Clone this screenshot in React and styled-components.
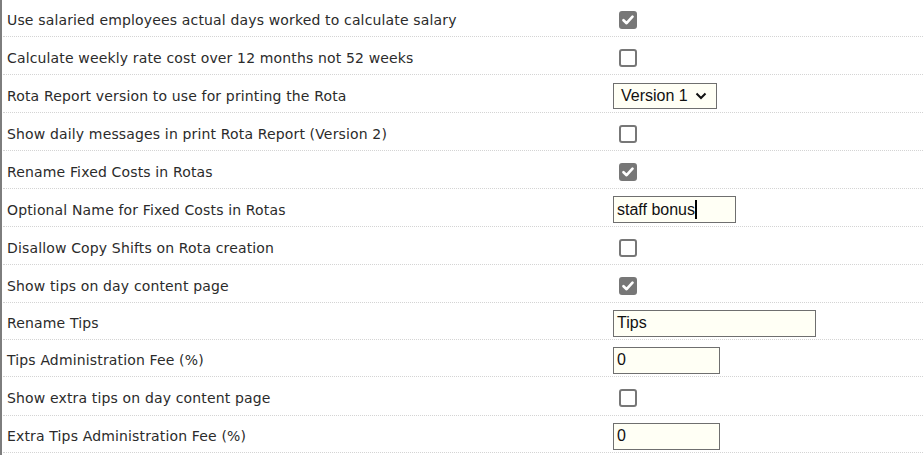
import React from "react";
import styled, { createGlobalStyle } from "styled-components";

const Global = createGlobalStyle`
  html, body { margin: 0; padding: 0; background: #fff; }
  body { font-family: "DejaVu Sans", sans-serif; }
`;

const Panel = styled.div`
  width: 923px;
  height: 456px;
  overflow: hidden;
  border-left: 2px solid #7d7d7d;
  box-sizing: border-box;
  margin-top: -1px;
`;

const Row = styled.div`
  display: grid;
  grid-template-columns: 610px 1fr;
  align-items: center;
  height: ${(p) => p.$h || 38}px;
  padding-top: 4px;
  margin-left: 1px;
  border-bottom: 1px dotted #d4d4d4;
  box-sizing: border-box;
`;

const Label = styled.div`
  padding-left: 4px;
  font-size: 14px;
  letter-spacing: 0.15px;
  color: #2b2b2b;
  white-space: nowrap;
`;

const Cell = styled.div`
  display: flex;
  align-items: center;
`;

const Box = styled.span`
  width: 18px;
  height: 18px;
  margin-left: 6px;
  box-sizing: border-box;
  border-radius: 3px;
  border: 2px solid #777;
  background: ${(p) => (p.$checked ? "#777" : "#fff")};
  display: flex;
  align-items: center;
  justify-content: center;
`;

const Field = styled.div`
  width: ${(p) => p.$w}px;
  height: 27px;
  box-sizing: border-box;
  border: 1px solid #6f6f6f;
  background: #fffff5;
  font-family: "Liberation Sans", Arial, sans-serif;
  font-size: 16px;
  color: #111;
  display: flex;
  align-items: center;
  padding-left: 3px;
`;

const Caret = styled.span`
  display: inline-block;
  width: 2px;
  height: 19px;
  background: #000;
`;

const Select = styled(Field)`
  height: 26px;
  padding-left: 7px;
  gap: 7px;
`;

function Check({ checked }) {
  return (
    <Box $checked={checked}>
      {checked && (
        <svg width="12" height="10" viewBox="0 0 12 10">
          <path d="M1.5 5.2 L4.6 8.2 L10.5 1.6" fill="none" stroke="#fff" strokeWidth="2.6" strokeLinecap="round" strokeLinejoin="round" />
        </svg>
      )}
    </Box>
  );
}

const rows = [
  { label: "Use salaried employees actual days worked to calculate salary", type: "check", checked: true },
  { label: "Calculate weekly rate cost over 12 months not 52 weeks", type: "check" },
  { label: "Rota Report version to use for printing the Rota", type: "select", value: "Version 1" },
  { label: "Show daily messages in print Rota Report (Version 2)", type: "check" },
  { label: "Rename Fixed Costs in Rotas", type: "check", checked: true },
  { label: "Optional Name for Fixed Costs in Rotas", type: "text", value: "staff bonus", w: 123, caret: true },
  { label: "Disallow Copy Shifts on Rota creation", type: "check" },
  { label: "Show tips on day content page", type: "check", checked: true },
  { label: "Rename Tips", type: "text", value: "Tips", w: 203, h: 37 },
  { label: "Tips Administration Fee (%)", type: "text", value: "0", w: 107, h: 37 },
  { label: "Show extra tips on day content page", type: "check", h: 39 },
  { label: "Extra Tips Administration Fee (%)", type: "text", value: "0", w: 107, h: 37 },
];

export default function App() {
  return (
    <>
      <Global />
      <Panel>
        {rows.map((r) => (
          <Row key={r.label} $h={r.h}>
            <Label>{r.label}</Label>
            <Cell>
              {r.type === "check" && <Check checked={r.checked} />}
              {r.type === "text" && (
                <Field $w={r.w}>
                  {r.value}
                  {r.caret && <Caret />}
                </Field>
              )}
              {r.type === "select" && (
                <Select $w={104}>
                  {r.value}
                  <svg width="12" height="8" viewBox="0 0 12 8">
                    <path d="M1.5 1.5 L6 6 L10.5 1.5" fill="none" stroke="#111" strokeWidth="2" />
                  </svg>
                </Select>
              )}
            </Cell>
          </Row>
        ))}
      </Panel>
    </>
  );
}
